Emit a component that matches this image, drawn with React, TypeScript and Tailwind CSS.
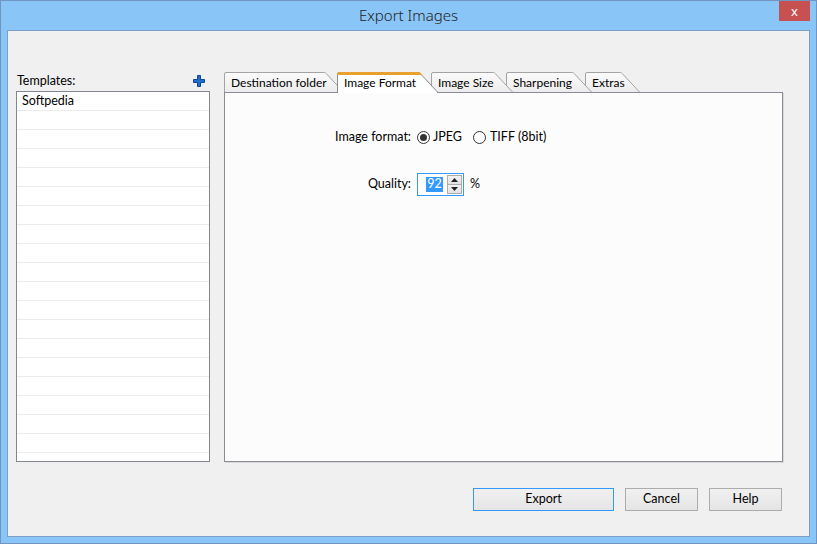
// App.tsx – Export Images dialog

type TabProps = {
  label: string;
  width: number;
  active?: boolean;
  z: string;
  first?: boolean;
  id: string;
};

const Tab = ({ label, width, active, z, first, id }: TabProps) => {
  const h = active ? 21 : 20;
  const w = width;
  const fillPath = `M0.5 ${h} L0.5 2 Q0.5 0.5 2 0.5 L${w - 19.5} 0.5 Q${w - 18.5} 0.5 ${w - 17.8} 1.5 L${w - 0.5} ${h} Z`;
  const strokePath = `M0.5 ${h} L0.5 2 Q0.5 0.5 2 0.5 L${w - 19.5} 0.5 Q${w - 18.5} 0.5 ${w - 17.8} 1.5 L${w - 0.5} ${active ? h - 1 : h}`;

  return (
    <div
      className={`relative flex items-start pt-[3px] pl-[7px] text-[12px] text-black ${z} ${first ? '' : 'ml-[-7px]'} ${active ? 'h-[21px] mb-[-1px]' : 'h-[20px]'}`}
      style={{ width: w }}
    >
      <svg className="absolute inset-0" width={w} height={h}>
        <defs>
          <linearGradient id={id} x1="0" y1="0" x2="0" y2="1">
            <stop offset="0" stopColor={active ? '#ffffff' : '#fbfbfb'} />
            <stop offset="1" stopColor={active ? '#ffffff' : '#ececec'} />
          </linearGradient>
        </defs>
        <path d={fillPath} fill={`url(#${id})`} />
        <path d={strokePath} fill="none" stroke={active ? '#898c95' : '#a3a3a3'} />
        {active && (
          <polygon points={`0,3 0,1.5 1.5,0 ${w - 18.5},0 ${w - 15.8},3`} fill="#e8a030" />
        )}
      </svg>
      <span className="relative leading-[16px]">{label}</span>
    </div>
  );
};

const Radio = ({ checked }: { checked?: boolean }) => (
  <span className="w-[13px] h-[13px] rounded-full border border-[#333333] bg-white flex items-center justify-center">
    {checked && <span className="w-[7px] h-[7px] rounded-full bg-[#333333]" />}
  </span>
);

const DialogButton = ({ label, primary, width }: { label: string; primary?: boolean; width: string }) => (
  <button
    className={`${width} h-[23px] border ${primary ? 'border-[#3399ff]' : 'border-[#acacac]'} bg-gradient-to-b from-[#f0f0f0] to-[#e5e5e5] text-[12.5px] text-black flex items-center justify-center`}
  >
    {label}
  </button>
);

export default function App() {
  const rows = Array.from({ length: 20 });

  return (
    <div className="relative w-[817px] h-[544px] bg-[#8ac5f7] border border-[#6f95c0] pt-[29px] px-[6px] pb-[6px] font-['Lato',sans-serif] select-none overflow-hidden">
      {/* title */}
      <div className="absolute top-0 left-0 right-0 h-[29px] flex items-center justify-center text-[15px] text-[#222] font-['Noto_Sans',sans-serif] font-light">
        Export Images
      </div>
      <div className="absolute top-0 right-[6px] w-[31px] h-[20px] bg-[#c75050] flex items-center justify-center text-white text-[13px] leading-none font-['Noto_Sans',sans-serif]">
        x
      </div>

      {/* client area */}
      <div className="w-full h-full border border-[#7b9dc6] bg-[#f0f0f0] flex flex-col">
        <div className="flex pt-[40px] pl-[8px] gap-[14px]">
          {/* templates */}
          <div className="w-[194px] flex flex-col">
            <div className="h-[20px] flex items-center justify-between pl-[1px] pr-[5px] text-[12.5px] text-black">
              <span>Templates:</span>
              <svg width="12" height="12" viewBox="0 0 12 12">
                <path
                  d="M4.5 0.5 H7.5 V4.5 H11.5 V7.5 H7.5 V11.5 H4.5 V7.5 H0.5 V4.5 H4.5 Z"
                  fill="#1f6fd1"
                  stroke="#0d4592"
                />
              </svg>
            </div>
            <div className="h-[371px] border border-[#828790] bg-white overflow-hidden">
              {rows.map((_, i) => (
                <div
                  key={i}
                  className="h-[19px] border-b border-[#ebebeb] pl-[5px] flex items-center text-[12.5px] text-black"
                >
                  {i === 0 ? 'Softpedia' : ''}
                </div>
              ))}
            </div>
          </div>

          {/* tabs + panel */}
          <div className="w-[559px] flex flex-col mt-[1px]">
            <div className="relative z-10 flex h-[20px]">
              <Tab id="t1" label="Destination folder" width={120} z="z-[5]" first />
              <Tab id="t2" label="Image Format" width={101} z="z-[9]" active />
              <Tab id="t3" label="Image Size" width={82} z="z-[4]" />
              <Tab id="t4" label="Sharpening" width={86} z="z-[3]" />
              <Tab id="t5" label="Extras" width={55} z="z-[2]" />
            </div>
            <div className="h-[370px] border border-[#898c95] bg-[#fcfcfc] shadow-[1px_1px_0_#d9d9d9] pt-[34px] text-[12.5px] text-black">
              <div className="flex items-center h-[20px]">
                <span className="w-[186px] text-right">Image format:</span>
                <span className="ml-[6px] flex items-center">
                  <Radio checked />
                  <span className="ml-[3px]">JPEG</span>
                </span>
                <span className="ml-[11px] flex items-center">
                  <Radio />
                  <span className="ml-[4px]">TIFF (8bit)</span>
                </span>
              </div>
              <div className="flex items-center mt-[26px]">
                <span className="w-[186px] text-right">Quality:</span>
                <div className="ml-[6px] w-[47px] h-[23px] border border-[#3399ff] bg-white flex items-center pl-[8px] pr-[1px]">
                  <span className="bg-[#3399ff] text-white h-[15px] w-[17px] flex items-center justify-center leading-none">
                    92
                  </span>
                  <div className="ml-auto flex flex-col w-[15px] h-[19px]">
                    <div className="h-[10px] border border-[#acacac] bg-gradient-to-b from-[#f2f2f2] to-[#e2e2e2] flex items-center justify-center">
                      <svg width="7" height="4" viewBox="0 0 7 4">
                        <polygon points="3.5,0 7,4 0,4" fill="#222" />
                      </svg>
                    </div>
                    <div className="h-[10px] mt-[-1px] border border-[#acacac] bg-gradient-to-b from-[#f2f2f2] to-[#e2e2e2] flex items-center justify-center">
                      <svg width="7" height="4" viewBox="0 0 7 4">
                        <polygon points="0,0 7,0 3.5,4" fill="#222" />
                      </svg>
                    </div>
                  </div>
                </div>
                <span className="ml-[6px]">%</span>
              </div>
            </div>
          </div>
        </div>

        {/* dialog buttons */}
        <div className="flex justify-end gap-[11px] mt-[26px] pr-[27px]">
          <DialogButton label="Export" primary width="w-[141px]" />
          <DialogButton label="Cancel" width="w-[73px]" />
          <DialogButton label="Help" width="w-[73px]" />
        </div>
      </div>
    </div>
  );
}
